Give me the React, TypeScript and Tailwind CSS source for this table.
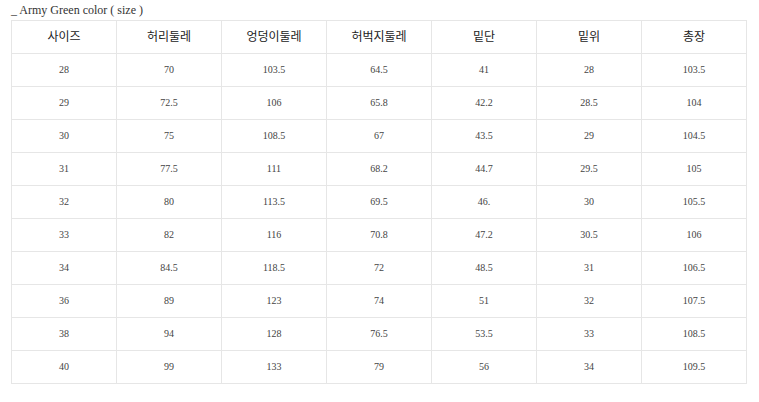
import React from 'react';

const headers = ['사이즈', '허리둘레', '엉덩이둘레', '허벅지둘레', '밑단', '밑위', '총장'];

const rows: string[][] = [
  ['28', '70', '103.5', '64.5', '41', '28', '103.5'],
  ['29', '72.5', '106', '65.8', '42.2', '28.5', '104'],
  ['30', '75', '108.5', '67', '43.5', '29', '104.5'],
  ['31', '77.5', '111', '68.2', '44.7', '29.5', '105'],
  ['32', '80', '113.5', '69.5', '46.', '30', '105.5'],
  ['33', '82', '116', '70.8', '47.2', '30.5', '106'],
  ['34', '84.5', '118.5', '72', '48.5', '31', '106.5'],
  ['36', '89', '123', '74', '51', '32', '107.5'],
  ['38', '94', '128', '76.5', '53.5', '33', '108.5'],
  ['40', '99', '133', '79', '56', '34', '109.5'],
];

const App: React.FC = () => {
  return (
    <div className="w-[759px] h-[402px] bg-white pl-[11px] pt-[2px]">
      <p className="h-[18px] text-[12px] leading-[16px] text-[#333] font-['Liberation_Serif',serif]">
        _ Army Green color ( size )
      </p>
      <table className="w-[736px] table-fixed border-collapse border border-[#e6e6e6]">
        <thead>
          <tr className="h-[33px]">
            {headers.map((h) => (
              <th
                key={h}
                className="border border-[#e6e6e6] font-normal text-[12px] text-[#222] text-center pb-[2px] font-['Noto_Sans_CJK_KR','Noto_Sans',sans-serif]"
              >
                {h}
              </th>
            ))}
          </tr>
        </thead>
        <tbody>
          {rows.map((r, i) => (
            <tr key={i} className="h-[33px]">
              {r.map((c, j) => (
                <td
                  key={j}
                  className="border border-[#e6e6e6] text-center text-[10px] text-[#444] pb-[1px] font-['Liberation_Serif',serif]"
                >
                  {c}
                </td>
              ))}
            </tr>
          ))}
        </tbody>
      </table>
    </div>
  );
};

export default App;
